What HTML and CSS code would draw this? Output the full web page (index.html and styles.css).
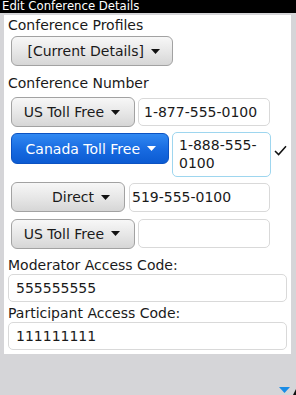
FILE: index.html
```html
<!DOCTYPE html>
<html>
<head>
<meta charset="utf-8">
<link rel="stylesheet" href="styles.css">
</head>
<body>
<div class="screen">
  <div class="title">Edit Conference Details</div>
  <div class="panel">
    <div class="label label-first">Conference Profiles</div>
    <div class="btn btn-profile"><span>[Current Details]</span><svg class="arrow" width="9" height="5" viewBox="0 0 9 5"><polygon points="0,0 9,0 4.5,5"/></svg></div>
    <div class="label label-number">Conference Number</div>

    <div class="row row-1">
      <div class="btn btn-us"><span>US Toll Free</span><svg class="arrow" width="9" height="5" viewBox="0 0 9 5"><polygon points="0,0 9,0 4.5,5"/></svg></div>
      <div class="field field-1">1-877-555-0100</div>
    </div>

    <div class="row row-2">
      <div class="btn btn-blue"><span>Canada Toll Free</span><svg class="arrow" width="9" height="5" viewBox="0 0 9 5"><polygon points="0,0 9,0 4.5,5"/></svg></div>
      <div class="field field-focus">1-888-555-<wbr>0100</div>
      <svg class="check" width="13" height="11" viewBox="0 0 13 11"><path d="M1 6 L4.6 9.6 L12 1.2" fill="none" stroke="#111" stroke-width="1.5"/></svg>
    </div>

    <div class="row row-3">
      <div class="btn btn-direct"><span>Direct</span><svg class="arrow" width="9" height="5" viewBox="0 0 9 5"><polygon points="0,0 9,0 4.5,5"/></svg></div>
      <div class="field field-3">519-555-0100</div>
    </div>

    <div class="row row-4">
      <div class="btn btn-us"><span>US Toll Free</span><svg class="arrow" width="9" height="5" viewBox="0 0 9 5"><polygon points="0,0 9,0 4.5,5"/></svg></div>
      <div class="field field-4"></div>
    </div>

    <div class="label label-code label-mod">Moderator Access Code:</div>
    <div class="field field-wide">555555555</div>
    <div class="label label-code label-part">Participant Access Code:</div>
    <div class="field field-wide">111111111</div>
  </div>
  <div class="footer">
    <svg class="more" width="11" height="6" viewBox="0 0 11 6"><polygon points="0,0 11,0 5.5,6" fill="#1a8ce6"/></svg>
    <svg class="corner" width="3" height="6" viewBox="0 0 3 6"><polygon points="3,0 3,6 0,6" fill="#111"/></svg>
  </div>
</div>
</body>
</html>
```

FILE: styles.css
```css
* { box-sizing: border-box; }

html, body {
  margin: 0;
  padding: 0;
}

body {
  background: #d5d5d8;
  font-family: "DejaVu Sans", "Liberation Sans", sans-serif;
  color: #1a1a1a;
}

.screen {
  width: 296px;
  height: 395px;
  overflow: hidden;
  display: flex;
  flex-direction: column;
}

.title {
  height: 13px;
  background: #000;
  color: #fff;
  font-size: 11.7px;
  line-height: 13px;
  padding-left: 2px;
  white-space: nowrap;
  overflow: hidden;
}

.panel {
  margin: 2px 5px 0 4px;
  background: #fff;
  display: flex;
  flex-direction: column;
  align-items: flex-start;
  padding-bottom: 4px;
}

.label {
  font-size: 14px;
  line-height: 20px;
  padding-left: 4px;
  white-space: nowrap;
}

.label-first { margin-bottom: 1px; }
.label-number { margin-top: 7px; margin-bottom: 4px; }

.label-code { line-height: 18px; }
.label-mod { margin-top: 7px; }
.label-part { margin-top: 2px; }

.btn {
  display: flex;
  align-items: center;
  justify-content: flex-end;
  gap: 7px;
  height: 30px;
  margin-left: 7px;
  padding-right: 14px;
  border: 1px solid #a2a2a2;
  border-radius: 6px;
  background: linear-gradient(#f7f7f7, #e6e6e6 55%, #d6d6d6);
  font-size: 14px;
  color: #1a1a1a;
  white-space: nowrap;
  flex: none;
}

.btn .arrow { fill: #111; flex: none; }

.btn-profile { width: 162px; padding-right: 12px; }
.btn-us { width: 124px; }
.btn-direct { width: 114px; }

.btn-blue {
  width: 158px;
  height: 31px;
  margin-top: 1px;
  padding-right: 12px;
  border-color: #0b52c2;
  background: linear-gradient(#3189f2, #176ae0 55%, #0c5bd2);
  color: #fff;
}
.btn-blue .arrow { fill: #fff; }

.row {
  display: flex;
  align-items: center;
}

.row-1 { height: 30px; gap: 3px; }
.row-2 { margin-top: 5px; gap: 3px; align-items: flex-start; }
.row-3 { margin-top: 5px; height: 30px; gap: 4px; }
.row-4 { margin-top: 6px; height: 31px; gap: 3px; }

.field {
  border: 1px solid #d9d9d9;
  border-radius: 5px;
  background: #fff;
  font-size: 14px;
  line-height: 26px;
  height: 28px;
  padding-left: 5px;
  white-space: nowrap;
  flex: none;
}

.field-1 { width: 132px; }
.field-3 { width: 141px; height: 29px; line-height: 27px; padding-left: 2px; }
.field-4 { width: 132px; height: 29px; }

.field-focus {
  width: 99px;
  height: 45px;
  border-color: #9ed6ef;
  line-height: 18px;
  padding: 3px 0 0 6px;
  white-space: normal;
}

.check {
  margin-top: 13px;
  margin-left: 0;
  flex: none;
}

.field-wide {
  width: 279px;
  margin-left: 4px;
  padding-left: 7px;
}

.footer {
  flex: 1;
  display: flex;
  justify-content: flex-end;
  align-items: flex-end;
  padding: 0 0 2px 0;
  gap: 3px;
}

.more { margin-bottom: 0; }
.corner { margin-bottom: -2px; }
```
